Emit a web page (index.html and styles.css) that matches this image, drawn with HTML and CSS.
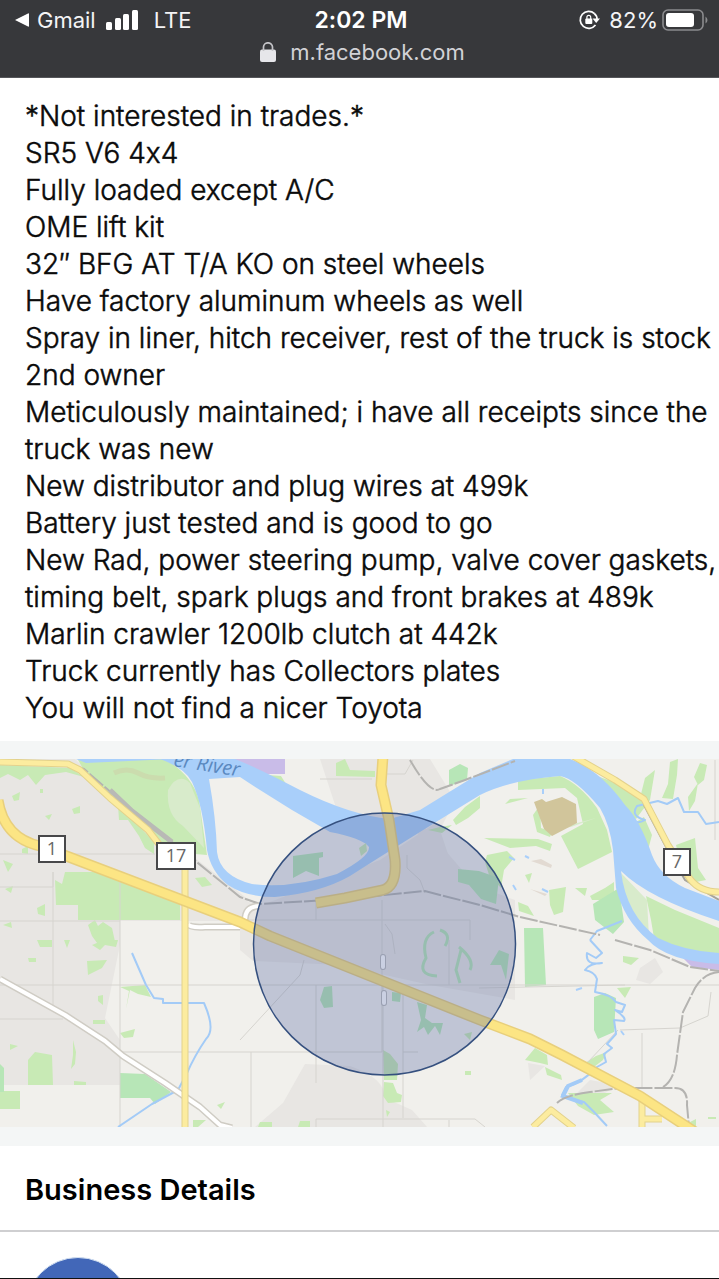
FILE: index.html
```html
<!DOCTYPE html>
<html lang="en">
<head>
  <meta charset="UTF-8">
  <meta name="viewport" content="width=device-width, initial-scale=1">
  <title>m.facebook.com</title>
  <link rel="stylesheet" href="styles.css">
</head>
<body>
<div class="screen">

  <header class="browser-bar">
    <div class="status">
      <div class="status-left">
        <a class="back" href="#">
          <svg width="15" height="16" viewBox="0 0 15 16" aria-hidden="true"><path d="M1 8 L14 1.500 Q15 1 15 2 V14 Q15 15 14 14.500Z" fill="#fff"/></svg>
          Gmail
        </a>
        <svg class="signal" width="32" height="20" viewBox="0 0 32 20" fill="#fff" aria-hidden="true">
          <rect x="0" y="12" width="6" height="8" rx="1.500"/>
          <rect x="9" y="8" width="6" height="12" rx="1.500"/>
          <rect x="17" y="4" width="6" height="16" rx="1.500"/>
          <rect x="26" y="0" width="6" height="20" rx="1.500"/>
        </svg>
        <span>LTE</span>
      </div>
      <div class="time">2:02 PM</div>
      <div class="status-right">
        <svg width="22" height="20" viewBox="0 0 22 20" aria-hidden="true">
          <path d="M15.500 3.600 A8.500 8.500 0 1 0 16.500 15" fill="none" stroke="#fff" stroke-width="1.700"/>
          <path d="M13.500 8.500 H21 L17.200 13Z" fill="#fff"/>
          <path d="M15.300 3.500 Q18.200 5.800 18 9.500" fill="none" stroke="#fff" stroke-width="1.700"/>
          <rect x="6.300" y="8.500" width="7" height="5.500" rx="1" fill="#fff"/>
          <path d="M7.900 9 V7.300 a1.900 2 0 0 1 3.800 0 V9" fill="none" stroke="#fff" stroke-width="1.200"/>
        </svg>
        <span>82%</span>
        <svg class="battery" width="46" height="22" viewBox="0 0 46 22" aria-hidden="true">
          <rect x="1" y="1" width="40" height="20" rx="5" fill="none" stroke="#8b8b8e" stroke-width="1.600"/>
          <rect x="4" y="4" width="28" height="14" rx="3" fill="#fff"/>
          <path d="M43.500 7.500 Q45.500 9 45.500 11 T43.500 14.500Z" fill="#8b8b8e"/>
        </svg>
      </div>
    </div>
    <div class="address">
      <svg width="16" height="20" viewBox="0 0 16 20" aria-hidden="true">
        <rect x="0" y="7.500" width="16" height="12.500" rx="2" fill="#e6e6ea"/>
        <path d="M3.500 9 V5 a4.500 4.200 0 0 1 9 0 V9" fill="none" stroke="#c4c4c8" stroke-width="1.700"/>
      </svg>
      <span>m.facebook.com</span>
    </div>
  </header>

  <main>
    <p class="description">
      *Not interested in trades.*<br>
      SR5 V6 4x4<br>
      Fully loaded except A/C<br>
      OME lift kit<br>
      32″ BFG AT T/A KO on steel wheels<br>
      Have factory aluminum wheels as well<br>
      Spray in liner, hitch receiver, rest of the truck is stock<br>
      2nd owner<br>
      Meticulously maintained; i have all receipts since the<br>
      truck was new<br>
      New distributor and plug wires at 499k<br>
      Battery just tested and is good to go<br>
      New Rad, power steering pump, valve cover gaskets,<br>
      timing belt, spark plugs and front brakes at 489k<br>
      Marlin crawler 1200lb clutch at 442k<br>
      Truck currently has Collectors plates<br>
      You will not find a nicer Toyota
    </p>

    <div class="map-wrap">
      <svg class="map" viewBox="0 759 719 368" preserveAspectRatio="xMidYMid slice" role="img" aria-label="Map of the seller's area">
        <rect class="land" x="0" y="759" width="719" height="368"/>

        <!-- built up areas -->
        <g class="urban">
          <path d="M0 759 H75 L160 840 L195 858 L245 897 L262 925 L240 921 H120 V945 L105 1018 L120 1040 V1085 H0Z"/>
          <path d="M320 759 H430 L455 800 L440 830 L460 890 L515 905 V1000 L430 985 L340 965 L253 961 L240 950 V900 L262 905 L380 860 L440 820 H340Z"/>
          <path d="M305 1064 L350 1066 Q385 1078 385 1098 L412 1110 L427 1127 H255 L283 1103Z"/>
          <path d="M420 822 L445 850 L475 885 L515 900 V950 L400 950Z"/>
          <path d="M640 968 L655 958 L663 972 L650 984 L636 980Z M590 1080 L618 1085 L600 1096 L575 1095Z M528 1063 L545 1066 L530 1080Z"/>
        </g>

        <!-- parks and woods -->
        <g class="green">
          <path d="M78 760 L165 759 Q192 775 199 800 L207 855 L172 852 L146 832 L85 772Z"/>
          <path d="M0 765 L70 768 L84 777 L66 772 L45 775 L36 785 L28 775 L20 780 L8 774 L0 778Z"/>
          <path d="M118 805 L133 820 L154 842 L154 854 L145 848 L139 836 L128 820 H119Z"/>
          <path d="M12 796 L20 792 19 800 14 801Z M72 809 L80 806 80 813 74 814Z M45 816 L52 814 49 820Z M40 789 h3 v4 h-3Z M22 849 l6 -3 v8 l-6 -1Z"/>
          <path d="M65 872 H115 L180 898 V920 H78 V905 H56 L55 880 L62 884Z"/>
          <path d="M3 860 L13 864 8 872Z M5 889 l8 -3 -2 7Z M37 908 l8 -4 v12 l-7 -2Z M3 925 l8 -3 1 6Z M88 925 L95 920 98 926 103 922 112 928 116 946 105 942 100 947 92 936Z M37 940 H52 V947 H40Z M64 940 H70 L67 948Z M92 945 L104 940 118 940 116 947 105 945 100 950Z M87 961 L107 960 102 968 88 975Z M28 958 h8 v4 h-7Z M98 996 l5 -1 v10 l-5 -4Z M73 1040 l3 12 -1 12 -4 5 2 -14Z M93 1020 h12 v4 h-12Z M10 1044 l8 2 -8 4Z M74 1081 l12 1 v3 h-12Z"/>
          <path d="M28 1060 L35 1052 52 1055 53 1085 H28Z M0 1091 H20 V1109 H0Z"/>
          <path d="M120 987 L145 985 151 997 138 994 130 990 126 1009 129 991Z M120 1033 l15 -4 -2 8 -9 1Z M193 1120 h13 l-8 7 h-5Z M217 1105 l8 -3 -4 7Z"/>
          <path d="M195 878 L205 877 212 885 202 887Z"/>
          <path d="M267 775 L281 776 286 784 277 783Z M336 763 L345 759 350 770 375 771 375 777 336 776Z M330 808 L348 813 336 815Z"/>
          <path d="M518 780 L560 776 Q580 784 597 808 L607 830 L612 852 L578 869 L561 836 L583 824 L577 798 L565 788 L518 790Z"/>
          <path d="M484 838 L538 839 552 844 550 851 536 846 510 848Z M505 804 L510 799 528 798Z M487 855 L507 851 514 858 504 870 501 888 489 875 485 862Z"/>
          <path d="M533 815 L537 832 550 837 552 832 541 828 540 805Z"/>
          <path d="M549 890 L566 887 563 912 554 915 550 905Z M575 888 L587 888 585 896Z M590 896 L605 888 614 882 614 894 604 900 592 900Z M525 875 l7 -2 -3 10Z M518 902 l10 4 6 10 -15 -5Z"/>
          <path d="M597 776 L625 786 640 798 645 778 655 770 650 800 636 819 622 812Z M670 762 L678 759 677 775 673 799 662 798 668 784Z M700 763 L707 765 704 780 698 785 694 777Z M688 797 l10 -14 -3 18 -6 10Z M633 824 L644 817 652 835 648 850Z"/>
          <path d="M646 896 L675 910 719 928 V961 L680 955 654 938 651 920Z"/>
          <path d="M676 845 L695 838 698 868 706 880 696 882 680 862Z M698 940 H719 V955Z"/>
          <path d="M428 830 L440 827 452 825 442 833Z M453 820 L465 807 480 796 480 808 468 818 456 825Z"/>
          <path d="M582 1065 L596 1056 607 1052 603 1060 590 1070Z M568 1093 L612 1093 600 1100 614 1112 594 1115 578 1106Z M525 1060 L535 1048 547 1055 548 1065 540 1063Z M545 1067 L561 1075 562 1080 547 1075Z M617 988 L631 987 625 998Z M623 956 l16 2 -8 7 -8 -3Z M708 1117 h8 v2 h-8Z M690 1122 l6 -3 v8 h-6Z"/>
          <path d="M384 1082 L393 1083 397 1093 402 1095 401 1102 388 1103 383 1096Z M386 1110 l4 2 -3 5Z M383 1050 l7 4 8 10 -1 16 h-13Z M260 1122 h12 v5 h-14Z M300 1121 h10 v6 h-12Z M464 1034 l8 -2 -2 8Z M465 1071 h6 v4 h-6Z"/>
        </g>
        <g class="green-pale">
          <path d="M168 790 Q178 772 190 783 L200 808 L204 848 L183 826 Q166 815 168 790Z"/>
          <path d="M621 873 L647 900 649 937 Q626 920 621 873Z"/>
          <path d="M555 829 L596 818 571 827Z"/>
        </g>
        <g class="green-deep">
          <path d="M293 856 L323 852 V857 L319 858 V876 L306 871 L293 878Z"/>
          <path d="M120 1073 L145 1074 171 1092 155 1104 150 1098 H120Z"/>
          <path d="M449 770 L460 764 468 768 467 780 449 786Z M458 869 L479 871 499 878 496 904 481 899 469 885 458 882Z"/>
          <path d="M524 928 H543 L546 985 L525 987Z M594 997 L605 993 616 998 614 1032 598 1039 594 1030Z M593 904 L619 888 624 922 613 934 595 920Z"/>
          <path d="M392 992 L401 993 400 1002 392 1001Z M417 1002 L427 1005 425 1018 432 1023 443 1023 440 1035 435 1026 428 1035 424 1027 417 1032 421 1020Z M324 987 L332 986 333 1007 324 1008 320 1000Z M0 1064 L4 1068 V1092 H0Z"/>
          <path d="M499 950 L509 954 506 980 501 965 490 965Z"/>
        </g>
        <path d="M434 932 Q421 938 426 958 Q416 975 437 976 M440 930 Q452 934 445 946 M459 947 Q475 960 470 970 M461 950 L456 970 L460 983" fill="none" stroke="#b7e6b7" stroke-width="3"/>
        <path d="M114 773 Q127 767 138 773 T165 778" fill="none" stroke="#cbdcae" stroke-width="5"/>
        <path class="sand" d="M534 802 L542 799 546 802 562 797 576 804 577 823 552 836 544 829Z"/>
        <path class="sand-pale" d="M531 861 L541 859 552 865 551 868Z M530 889 l17 5 -2 2Z"/>
        <path class="purple" d="M213 759 H285 V774 L265 774 Z M681 956 L719 960 V970 L692 967Z"/>

        <!-- local roads -->
        <g class="lanes">
          <path d="M0 854 H155 M0 887 H53 V872 V1007 M0 921 H120 M120 880 V1127 M0 985 H720 M0 1019 H63 M120 1052 H382 V900 M240 920 H470 V940 M316 900 V920 M316 985 V1083 M383 985 V1127 M403 985 V1118 M403 1052 H418 M316 1127 V1119 H475 L485 1127 M251 1052 V1127 M240 1040 L300 975 304 960"/>
          <path d="M449 940 V985 M479 988 L625 985 M620 1030 L680 1028 708 1016 711 992 M642 1033 V1088 M320 779 H372 M387 774 H405 L413 760 M715 760 V840 M588 1062 L618 1030 M449 1120 V1127"/>
          <path d="M385 924 L392 934 395 954 M407 855 V868 L420 880 425 893" />
        </g>

        <!-- creeks -->
        <g class="creek">
          <path d="M132 953 L146 985 154 998 163 999 V1003 H204 Q216 1030 206 1039 Q195 1055 187 1073 L178 1090 L152 1104 L118 1127"/>
          <path d="M590 940 L602 953 596 958 587 953 Q585 966 602 963 Q590 963 585 970 Q595 972 597 979 L595 992 Q612 995 616 1002 L625 1005 622 1012 615 1010 Q627 1018 624 1021 L614 1020 616 1034 607 1044 612 1048 604 1054 606 1062 597 1067 Q582 1083 566 1087 L562 1095 Q577 1102 584 1102 L594 1112 607 1126"/>
          <path d="M719 822 L706 824 698 812 684 812 678 798 667 804 658 801 637 806 Q630 816 645 820 Q635 826 632 816 M622 921 L597 931 590 940"/>
        </g>
        <path d="M576 990 l6 -2 M543 789 v5 M509 857 l6 3 M525 856 l4 2 M542 889 l6 3 M513 885 l3 5 M621 1031 l3 4" stroke="#a9cffa" stroke-width="2" fill="none"/>
        <path d="M582 1080 L568 1086 L563 1096 583 1103" stroke="#a3cbf7" stroke-width="4" fill="none"/>

        <!-- river -->
        <path class="water" fill-rule="evenodd" d="M160 759 Q185 768 192 782 Q203 805 207 850 Q211 872 228 885 Q246 897 275 897 Q320 893 350 876 Q400 844 480 795 Q510 780 560 776 Q575 778 600 808 Q610 825 613 850 L616 888 Q624 920 648 940 Q667 961 719 964 V953 Q684 951 658 938 Q626 915 621 871 Q648 898 719 921 V901 L685 888 Q660 876 652 855 Q640 820 625 805 Q600 770 570 759 H513 L480 773 L420 810 L390 819 Q350 815 300 790 Q260 769 235 759Z
          M209 779 L240 777 Q285 807 330 832 Q362 838 369 847 Q370 857 337 874 Q290 889 252 884 Q220 876 217 852 Q216 818 209 779Z"/>
        <path class="water" d="M76 759 H172 L150 760 L86 763Z"/>
        <path d="M359 848 L366 843 367 851 361 856Z" fill="#c8e8b6"/>
        <text class="river-name" x="173" y="766" transform="rotate(9 173 766)">er River</text>

        <!-- railways -->
        <g class="rail">
          <path d="M32 761 L68 764 L84 769 L120 800 L172 842 L240 897 L260 904 L345 899 L405 893 L425 891 L440 895 L480 905 L520 917 L600 935 M615 940 L650 950 L690 967 L719 971"/>
          <path d="M410 760 Q430 795 440 789 L465 780 L515 761 M719 972 Q704 973 695 988 L683 1012 L677 1055 Q675 1080 663 1087"/>
          <path d="M557 1103 Q565 1095 590 1092 L620 1088 H675 Q688 1088 687 1105 L689 1127"/>
        </g>
        <path d="M110 790 L132 811 L172 842" stroke="#b9b9b6" stroke-width="5" fill="none"/>
        <path d="M644 805 L665 845 L685 880 L719 900" stroke="#a6a49b" stroke-width="2" fill="none"/>

        <!-- highways -->
        <g class="road-white-edge">
          <path d="M0 979 L65 1015 L105 1041 L123 1056 L165 1083 L200 1107 L220 1125 L232 1128"/>
          <path d="M188 924 Q190 928 205 927 L240 927 M245 920 Q245 906 260 906"/>
        </g>
        <g class="road-white">
          <path d="M0 979 L65 1015 L105 1041 L123 1056 L165 1083 L200 1107 L220 1125 L232 1128"/>
          <path d="M188 924 Q190 928 205 927 L240 927 M245 920 Q245 906 260 906"/>
        </g>
        <g class="minor-edge">
          <path d="M0 762 L68 764 L80 770 L110 798 L148 830 L165 852 M185 868 V1127"/>
          <path d="M573 756 L615 780 L644 799 L668 845 L690 879 Q700 892 719 892"/>
          <path d="M533 1127 L551 1110 L574 1128 M642 1096 V1127 M642 1119 H662"/>
        </g>
        <g class="minor">
          <path d="M0 762 L68 764 L80 770 L110 798 L148 830 L165 852 M185 868 V1127"/>
          <path d="M573 756 L615 780 L644 799 L668 845 L690 879 Q700 892 719 892"/>
          <path d="M533 1127 L551 1110 L574 1128 M642 1096 V1127 M642 1119 H662"/>
        </g>
        <g class="major-edge">
          <path d="M-2 800 Q4 838 40 846 L240 922 L270 936 L385 982 L480 1020 L530 1039 L562 1055 L640 1096 L695 1132"/>
          <path d="M383 756 L381 785 L389 820 L395 860 Q397 886 383 890 L345 898 L316 903"/>
        </g>
        <g class="major">
          <path d="M-2 800 Q4 838 40 846 L240 922 L270 936 L385 982 L480 1020 L530 1039 L562 1055 L640 1096 L695 1132"/>
          <path d="M383 756 L381 785 L389 820 L395 860 Q397 886 383 890 L345 898 L316 903"/>
        </g>
        <path d="M383 957 V967 M384 993 V1003" stroke="#b9b9b9" stroke-width="6" stroke-linecap="round"/>
        <path d="M383 957 V967 M384 993 V1003" stroke="#fff" stroke-width="4" stroke-linecap="round"/>

        <!-- approximate location -->
        <circle class="area" cx="384.500" cy="944" r="131"/>

        <!-- route shields -->
        <g class="shield">
          <rect x="39" y="836" width="26" height="26"/>
          <text x="52" y="855">1</text>
          <rect x="157" y="843" width="38" height="26"/>
          <text x="176" y="862">17</text>
          <rect x="664" y="849" width="26" height="26"/>
          <text x="677" y="868">7</text>
        </g>
      </svg>
    </div>

    <h2 class="section-title">Business Details</h2>
    <div class="seller">
      <div class="avatar"></div>
    </div>
  </main>

</div>
</body>
</html>
```
FILE: styles.css
```css
body {
  margin: 0;
  background: #fff;
  color: #0a0a0a;
  font-family: Inter, "Liberation Sans", sans-serif;
  font-feature-settings: "calt" 0;
}

.screen {
  box-sizing: border-box;
  height: 100vh;
  overflow: hidden;
  border-bottom: 1px solid #111;
}

/* Browser bar */
.browser-bar {
  background: #37383b;
  color: #f4f4f6;
  border-bottom: 1px solid #55565a;
  padding-bottom: 13px;
  font-size: 22px;
}

.status {
  display: grid;
  grid-template-columns: 1fr auto 1fr;
  align-items: center;
  height: 40px;
  padding: 0 11px 0 14px;
}

.status-left,
.status-right,
.back {
  display: flex;
  align-items: center;
}

.status-left {
  gap: 10px;
}

.back {
  gap: 8px;
  color: inherit;
  text-decoration: none;
}

.signal {
  margin-right: 6px;
}

.status-right {
  justify-content: flex-end;
  gap: 4px;
}

.status-right span {
  margin-left: 4px;
}

.time {
  color: #fff;
  font-size: 23px;
  font-weight: 600;
}

.address {
  display: flex;
  justify-content: center;
  align-items: center;
  gap: 14px;
  height: 24px;
  padding-left: 6px;
  color: #d2d2d6;
}

/* Listing text */
.description {
  margin: 0;
  padding: 20px 0 14px 25px;
  font-size: 28px;
  font-weight: 300;
  -webkit-text-stroke: 0.5px #0a0a0a;
  line-height: 37px;
  white-space: nowrap;
}

/* Map */
.map-wrap {
  padding: 18px 0 19px;
  background: #f4f6f6;
}

.map {
  display: block;
  width: 100%;
  height: 368px;
}

.land {
  fill: #f1f0ec;
}

.urban {
  fill: #e8e6e3;
}

.green {
  fill: #c8eab5;
}

.green-pale {
  fill: #d8ebcb;
}

.green-deep {
  fill: #b7e6b7;
}

.sand {
  fill: #d1c59b;
}

.sand-pale {
  fill: #e2dad2;
}

.purple {
  fill: #c9bce8;
}

.water {
  fill: #a9cffa;
}

.lanes {
  fill: none;
  stroke: #d6d4cf;
  stroke-width: 1;
}

.creek {
  fill: none;
  stroke: #a3cbf7;
  stroke-width: 2;
  stroke-linejoin: round;
}

.rail {
  fill: none;
  stroke: #b4b3b0;
  stroke-width: 2;
  stroke-dasharray: 18 2;
}

.road-white-edge,
.road-white,
.minor-edge,
.minor,
.major-edge,
.major {
  fill: none;
  stroke-linejoin: round;
}

.road-white-edge {
  stroke: #cfccc4;
  stroke-width: 7;
}

.road-white {
  stroke: #fff;
  stroke-width: 4;
}

.minor-edge {
  stroke: #e3d28c;
  stroke-width: 7;
}

.minor {
  stroke: #fcec9f;
  stroke-width: 5;
}

.major-edge {
  stroke: #e8cf7c;
  stroke-width: 11;
}

.major {
  stroke: #fce584;
  stroke-width: 8;
}

.area {
  fill: #5064a0;
  fill-opacity: 0.3;
  stroke: #35507f;
  stroke-width: 1.5;
}

.river-name {
  fill: #5a88bf;
  font: italic 500 20px "Open Sans", sans-serif;
}

.shield rect {
  fill: #fff;
  stroke: #48484a;
  stroke-width: 2;
}

.shield text {
  fill: #666;
  font: 18px "Open Sans", sans-serif;
  text-anchor: middle;
}

/* Seller */
.section-title {
  margin: 0;
  padding: 26px 25px 22px;
  border-bottom: 2px solid #cfcfd1;
  color: #000;
  font-size: 29px;
  font-weight: 600;
  line-height: 36px;
}

.seller {
  padding: 25px;
}

.avatar {
  width: 104px;
  height: 104px;
  border: 1px solid #d5e2f2;
  border-radius: 50%;
  background: #4267b8;
}
```
